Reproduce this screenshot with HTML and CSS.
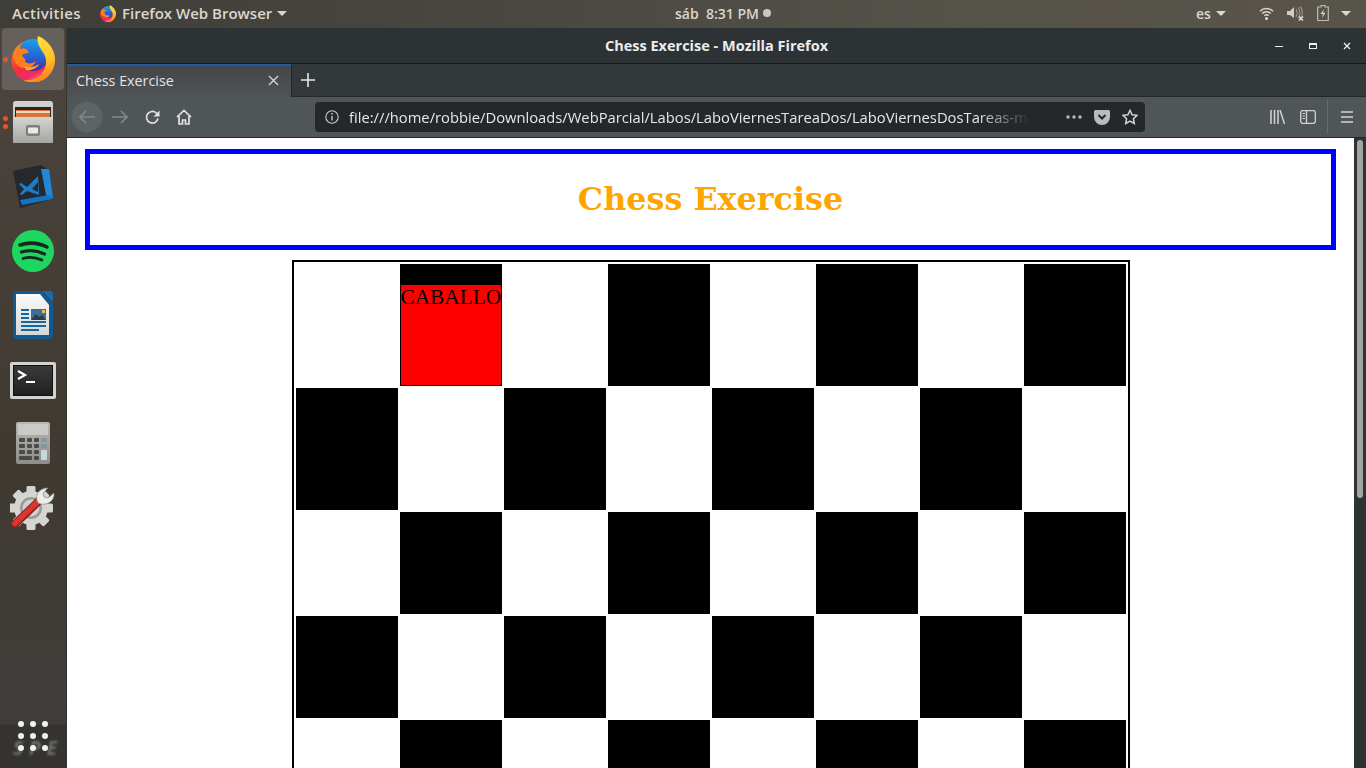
FILE: index.html
```html
<!DOCTYPE html>
<html lang="es">
<head>
<meta charset="utf-8">
<title>Chess Exercise</title>
<link rel="stylesheet" href="styles.css">
</head>
<body>
<svg class="defs" width="0" height="0">
  <defs>
    <linearGradient id="fxBase" x1="0.1" y1="0.1" x2="0.6" y2="1">
      <stop offset="0" stop-color="#ff8a1f"/><stop offset="0.5" stop-color="#f5303a"/><stop offset="0.8" stop-color="#ee2a6a"/><stop offset="1" stop-color="#ff8a22"/>
    </linearGradient>
    <linearGradient id="fxTail" x1="0.3" y1="0" x2="0.6" y2="1">
      <stop offset="0" stop-color="#ffe640"/><stop offset="0.6" stop-color="#ffc126"/><stop offset="1" stop-color="#ff7a1c"/>
    </linearGradient>
    <linearGradient id="fxGlobe" x1="0.5" y1="0" x2="0.4" y2="1">
      <stop offset="0" stop-color="#17a4ef"/><stop offset="0.55" stop-color="#2a62cf"/><stop offset="1" stop-color="#4a2a9e"/>
    </linearGradient>
    <symbol id="firefox" viewBox="0 0 44 46">
      <circle cx="22" cy="25" r="21.500" fill="url(#fxBase)"/>
      <circle cx="22" cy="19" r="16" fill="url(#fxGlobe)"/>
      <path d="M27 0c6 2 13 8 16 17 3 10-1 19-7 24-7 6-17 7-24 3 8 1 16-1 20-8 4-6 4-13 1-18C30 13 25 8 27 0z" fill="url(#fxTail)"/>
      <path d="M4 14c1-3 3-4 6-5-1 2-1 3 0 4 2-1 4-1 6 1 1 1 2 2 1 3l-5 1c-1 1-1 2 0 3 2 1 3 3 2 5 3 2 8 2 11-1-1 4-6 8-12 7-6 0-10-6-11-12 0-2 1-5 2-6z" fill="#ff7f1e"/>
      <path d="M13 30c4 2 9 2 15-2-2 5-9 7-13 6z" fill="#ffa92a"/>
    </symbol>
    <linearGradient id="cabMetal" x1="0" y1="0" x2="0" y2="1">
      <stop offset="0" stop-color="#d4d4d2"/><stop offset="1" stop-color="#a5a5a3"/>
    </linearGradient>
    <linearGradient id="pageGrad" x1="0" y1="0" x2="0" y2="1">
      <stop offset="0" stop-color="#fbfbfa"/><stop offset="1" stop-color="#d6d6d3"/>
    </linearGradient>
    <linearGradient id="calcGrad" x1="0" y1="0" x2="0" y2="1">
      <stop offset="0" stop-color="#b7b7b4"/><stop offset="1" stop-color="#8d8d8a"/>
    </linearGradient>
    <linearGradient id="termGrad" x1="0" y1="0" x2="0" y2="1">
      <stop offset="0" stop-color="#3a3a3a"/><stop offset="1" stop-color="#202020"/>
    </linearGradient>
  </defs>
</svg>

<header class="topbar">
  <span class="activities">Activities</span>
  <span class="appmenu">
    <svg class="appicon" width="16" height="17"><use href="#firefox"/></svg>
    <span>Firefox Web Browser</span>
    <i class="caret"></i>
  </span>
  <span class="clock">sáb&nbsp; 8:31 PM<i class="clockdot"></i></span>
  <span class="lang">es<i class="caret"></i></span>
  <span class="status">
    <svg class="st-wifi" width="15" height="14" viewBox="0 0 15 14"><path d="M1 5.200a9.200 9.200 0 0 1 13 0" fill="none" stroke="#d8d6cf" stroke-width="1.500"/><path d="M3.200 7.600a6 6 0 0 1 8.600 0" fill="none" stroke="#d8d6cf" stroke-width="1.500"/><path d="M5.400 9.800a3 3 0 0 1 4.200 0" fill="none" stroke="#d8d6cf" stroke-width="1.400"/><circle cx="7.500" cy="12.400" r="1.500" fill="#e4e2dc"/></svg>
    <svg class="st-vol" width="17" height="15" viewBox="0 0 17 15"><path d="M0 5h3l4-4v11l-4-3H0z" fill="#cfcdc6"/><path d="M9 3c1.500 2 1.500 6 0 8M11 1.500c2.500 3 2.500 8 0 11M13 .5c2.800 3 3 8 1 10.500" fill="none" stroke="#99978f" stroke-width="1.100"/><path d="M12 10.500l4 4M16 10.500l-4 4" stroke="#e4e2dc" stroke-width="1.500"/></svg>
    <svg class="st-bat" width="12" height="16" viewBox="0 0 12 16"><path d="M4 .5h4V2h3.300v13.500H.7V2H4z" fill="none" stroke="#bdbbb4" stroke-width="1.200"/><path d="M7 4L3.500 9H6l-1 4 3.500-5.200H6z" fill="#d8d6cf"/></svg>
    <i class="caret"></i>
  </span>
</header>

<div class="desktop">
  <nav class="dock">
    <div class="dock-item active"><i class="pip"></i>
      <svg width="44" height="46"><use href="#firefox"/></svg>
    </div>
    <div class="dock-item"><i class="pip pip-a"></i><i class="pip pip-b"></i>
      <svg class="ic-files" width="44" height="44" viewBox="0 0 44 44">
        <path d="M2 4a3 3 0 0 1 3-3h34a3 3 0 0 1 3 3v39H2z" fill="url(#cabMetal)"/>
        <rect x="4" y="7" width="36" height="11" fill="#2b2622"/>
        <rect x="5" y="10" width="34" height="8" fill="#d8743a"/>
        <rect x="5" y="11" width="34" height="2" fill="#f3d9b5"/>
        <rect x="2" y="17" width="40" height="26" rx="1" fill="url(#cabMetal)"/>
        <rect x="15" y="25" width="14" height="11" rx="2" fill="#7e7e7c"/>
        <rect x="17" y="27.500" width="10" height="6" rx="1" fill="#e9e9e7"/>
      </svg>
    </div>
    <div class="dock-item">
      <svg width="42" height="44" viewBox="0 0 42 44">
        <path d="M1 6L29 0l6 4 6 30L8 43z" fill="#25282c"/>
        <path d="M29 4l8 0 4 29-6 2z" fill="#1f86d8"/>
        <path d="M8 35l29-5 4 4-31 6z" fill="#1673bd"/>
        <path d="M26 11L15 22l-6-4-2 1 5 5-4 5 2 1 5-4 12 4z" fill="#1f7cc8"/>
        <path d="M26 17l-6 7 6 3z" fill="#25282c"/>
      </svg>
    </div>
    <div class="dock-item">
      <svg width="42" height="42" viewBox="0 0 42 42">
        <circle cx="21" cy="21" r="21" fill="#1ed760"/>
        <path d="M8 15c9-3 19-2 27 2" fill="none" stroke="#15291c" stroke-width="3.600" stroke-linecap="round"/>
        <path d="M9.500 22c8-2.500 16-1.500 23 2" fill="none" stroke="#15291c" stroke-width="3.200" stroke-linecap="round"/>
        <path d="M11 28.500c6-2 13-1.200 19 1.500" fill="none" stroke="#15291c" stroke-width="2.700" stroke-linecap="round"/>
      </svg>
    </div>
    <div class="dock-item">
      <svg width="40" height="48" viewBox="0 0 40 48">
        <path d="M3 0h25l12 12v33a3 3 0 0 1-3 3H3a3 3 0 0 1-3-3V3a3 3 0 0 1 3-3z" fill="#0f5a92"/>
        <path d="M3 3h24l9 11v30H3z" fill="url(#pageGrad)"/>
        <path d="M29 0h9l2 2v9z" fill="#1a6ba8"/>
        <path d="M8 18h8v2H8zM8 22h8v2H8zM8 26h8v2H8zM8 30h25v2H8zM8 34h25v2H8zM8 38h18v2H8z" fill="#15659f"/>
        <rect x="18" y="18" width="15" height="11" fill="#3f6f95"/>
        <path d="M18 29l5-6 3 3 3-2 4 5z" fill="#2a3c4e"/>
        <rect x="29" y="19" width="3" height="3" fill="#e8c24a"/>
      </svg>
    </div>
    <div class="dock-item">
      <svg class="ic-term" width="46" height="37" viewBox="0 0 46 37">
        <rect width="46" height="37" rx="2" fill="#d2d2cf"/>
        <rect x="3" y="3" width="40" height="31" fill="#111"/>
        <rect x="4" y="4" width="38" height="29" fill="url(#termGrad)"/>
        <path d="M8 9l7 4-7 4" fill="none" stroke="#fff" stroke-width="2.200"/>
        <rect x="16" y="19" width="9" height="2" fill="#fff"/>
      </svg>
    </div>
    <div class="dock-item">
      <svg width="34" height="42" viewBox="0 0 34 42">
        <rect width="34" height="42" rx="2" fill="url(#calcGrad)"/>
        <rect x="2" y="2" width="30" height="11" fill="#c9c9c6"/>
        <g fill="#4a4c4c">
          <rect x="3" y="16" width="6" height="4" rx="1"/><rect x="11" y="16" width="5" height="4" rx="1"/><rect x="18" y="16" width="5" height="4" rx="1"/>
          <rect x="3" y="22" width="6" height="4" rx="1"/><rect x="11" y="22" width="5" height="4" rx="1"/><rect x="18" y="22" width="5" height="4" rx="1"/>
          <rect x="3" y="28" width="6" height="4" rx="1"/><rect x="11" y="28" width="5" height="4" rx="1"/><rect x="18" y="28" width="5" height="4" rx="1"/>
          <rect x="3" y="34" width="13" height="4" rx="1"/><rect x="18" y="34" width="5" height="4" rx="1"/>
        </g>
        <rect x="25" y="16" width="6" height="4" rx="1" fill="#7f9a9c"/><rect x="25" y="22" width="6" height="4" rx="1" fill="#7f9a9c"/>
        <rect x="25" y="28" width="6" height="10" rx="1" fill="#c5dadb"/>
      </svg>
    </div>
    <div class="dock-item">
      <svg width="46" height="46" viewBox="0 0 46 46">
        <g fill="#d4d4d1">
          <circle cx="21" cy="24" r="17"/>
          <rect x="16.500" y="2" width="9" height="44" rx="1.500"/>
          <rect x="16.500" y="2" width="9" height="44" rx="1.500" transform="rotate(45 21 24)"/>
          <rect x="16.500" y="2" width="9" height="44" rx="1.500" transform="rotate(90 21 24)"/>
          <rect x="16.500" y="2" width="9" height="44" rx="1.500" transform="rotate(135 21 24)"/>
        </g>
        <circle cx="21" cy="24" r="11" fill="#9a9a97"/>
        <circle cx="21" cy="24" r="8.500" fill="#cfcfcc"/>
        <path d="M5 40L30 16" stroke="#8e1f1c" stroke-width="8" stroke-linecap="round"/>
        <path d="M5 39.500L30 15.500" stroke="#d8362f" stroke-width="5.500" stroke-linecap="round"/>
        <path d="M28 19C24 11 29 4 38 4l-5 5 1 4 4 1 6-5c1 8-8 14-16 10z" fill="#ecece9" stroke="#8a8a87" stroke-width=".7"/>
      </svg>
    </div>
    <div class="apps">
      <i></i><i></i><i></i><i></i><i></i><i></i><i></i><i></i><i></i>
    </div>
    <span class="wall-text">SPE</span>
  </nav>

  <section class="window">
    <div class="titlebar">
      <span class="wintitle">Chess Exercise - Mozilla Firefox</span>
      <span class="winctl">
        <i class="w-min"></i><i class="w-max"></i>
        <svg width="8" height="8" viewBox="0 0 8 8"><path d="M1 1l6 6M7 1l-6 6" stroke="#eee" stroke-width="1.300"/></svg>
      </span>
    </div>
    <div class="tabbar">
      <div class="tab">
        <span>Chess Exercise</span>
        <svg width="11" height="11" viewBox="0 0 11 11"><path d="M1 1l9 9M10 1l-9 9" stroke="#d4d5d6" stroke-width="1.400"/></svg>
      </div>
      <svg class="newtab" width="14" height="14" viewBox="0 0 14 14"><path d="M7 0v14M0 7h14" stroke="#e6e7e8" stroke-width="1.600"/></svg>
    </div>
    <div class="navbar">
      <span class="backbtn">
        <svg width="16" height="14" viewBox="0 0 16 14"><path d="M7 1L1 7l6 6M1 7h15" fill="none" stroke="#83878a" stroke-width="1.700"/></svg>
      </span>
      <svg class="fwd" width="16" height="14" viewBox="0 0 16 14"><path d="M9 1l6 6-6 6M15 7H0" fill="none" stroke="#83878a" stroke-width="1.700"/></svg>
      <svg class="reload" width="15" height="15" viewBox="0 0 15 15"><path d="M13 8.500A5.800 5.800 0 1 1 11.300 3L13.500 5" fill="none" stroke="#e2e3e4" stroke-width="1.700"/><path d="M14.500 0.500v6h-6z" fill="#e2e3e4"/></svg>
      <svg class="home" width="16" height="16" viewBox="0 0 16 16"><path d="M1 8l7-6.500L15 8M3 7v8h3.500v-4h3v4H13V7" fill="none" stroke="#e2e3e4" stroke-width="1.700"/></svg>
      <div class="urlbar">
        <svg class="info" width="14" height="14" viewBox="0 0 14 14"><circle cx="7" cy="7" r="6.200" fill="none" stroke="#c9cbcc" stroke-width="1.100"/><path d="M7 6v4.500" stroke="#c9cbcc" stroke-width="1.400"/><circle cx="7" cy="3.800" r=".9" fill="#c9cbcc"/></svg>
        <span class="url">file:///home/robbie/Downloads/WebParcial/Labos/LaboViernesTareaDos/LaboViernesDosTareas-ma</span>
        <svg class="dots" width="16" height="4" viewBox="0 0 16 4"><circle cx="2" cy="2" r="1.700" fill="#b9bbbc"/><circle cx="8" cy="2" r="1.700" fill="#b9bbbc"/><circle cx="14" cy="2" r="1.700" fill="#b9bbbc"/></svg>
        <svg class="pocket" width="16" height="15" viewBox="0 0 16 15"><path d="M1.500 0h13A1.500 1.500 0 0 1 16 1.500V7a8 8 0 0 1-16 0V1.500A1.500 1.500 0 0 1 1.500 0z" fill="#b9bbbc"/><path d="M4.500 5L8 8.500 11.500 5" fill="none" stroke="#25282b" stroke-width="2"/></svg>
        <svg class="star" width="16" height="16" viewBox="0 0 16 16"><path d="M8 1.300l2.100 4.400 4.900.6-3.600 3.400.9 4.800L8 12.200l-4.300 2.300.9-4.800L1 6.300l4.900-.6z" fill="none" stroke="#d2d3d4" stroke-width="1.500"/></svg>
      </div>
      <svg class="library" width="15" height="14" viewBox="0 0 15 14"><path d="M1 0v14M4.500 0v14M8 0v14M10 0l4.500 14" fill="none" stroke="#d2d3d4" stroke-width="1.500"/></svg>
      <svg class="sidebar" width="16" height="14" viewBox="0 0 16 14"><rect x=".7" y=".7" width="14.600" height="12.600" rx="2" fill="none" stroke="#d2d3d4" stroke-width="1.300"/><path d="M6.500 1v12" stroke="#d2d3d4" stroke-width="1.300"/><path d="M2.500 3.500h2.500M2.500 6h2.500M2.500 8.500h2.500" stroke="#d2d3d4"/></svg>
      <i class="navsep"></i>
      <svg class="menu" width="12" height="12" viewBox="0 0 12 12"><path d="M0 1h12M0 6h12M0 11h12" stroke="#d2d3d4" stroke-width="1.600"/></svg>
    </div>

    <div class="viewport">
      <main class="page">
        <h1 class="heading">Chess Exercise</h1>
        <div class="board">
          <div class="w"></div><div class="b piece-cell"><div class="piece">CABALLO</div></div><div class="w"></div><div class="b"></div><div class="w"></div><div class="b"></div><div class="w"></div><div class="b"></div>
          <div class="b"></div><div class="w"></div><div class="b"></div><div class="w"></div><div class="b"></div><div class="w"></div><div class="b"></div><div class="w"></div>
          <div class="w"></div><div class="b"></div><div class="w"></div><div class="b"></div><div class="w"></div><div class="b"></div><div class="w"></div><div class="b"></div>
          <div class="b"></div><div class="w"></div><div class="b"></div><div class="w"></div><div class="b"></div><div class="w"></div><div class="b"></div><div class="w"></div>
          <div class="w"></div><div class="b"></div><div class="w"></div><div class="b"></div><div class="w"></div><div class="b"></div><div class="w"></div><div class="b"></div>
        </div>
      </main>
      <div class="scrollbar"><i class="thumb"></i></div>
    </div>
  </section>
</div>
</body>
</html>
```
FILE: styles.css
```css
* { box-sizing: border-box; }
html, body { margin: 0; height: 768px; overflow: hidden; }
body {
  width: 1366px;
  display: flex;
  flex-direction: column;
  font-family: "Open Sans", "Noto Sans", sans-serif;
  background: #3c3a35;
}
i { display: block; }
.defs { position: absolute; }

/* GNOME top bar */
.topbar {
  height: 28px;
  flex: none;
  display: flex;
  align-items: center;
  padding: 0 0 2px 12px;
  background: linear-gradient(90deg, #3f3d38 0%, #4b4842 40%, #55524a 70%, #58544c 100%);
  color: #d9d7d0;
  font-size: 14px;
  font-weight: 600;
}
.activities { width: 88px; font-size: 15px; letter-spacing: .3px; }
.appmenu { display: flex; align-items: center; gap: 6px; width: 575px; font-size: 15px; }
.appicon { flex: none; }
.caret {
  width: 0; height: 0;
  border-left: 5px solid transparent;
  border-right: 5px solid transparent;
  border-top: 5px solid #d9d7d0;
}
.appmenu .caret { margin-left: -1px; }
.clock { display: flex; align-items: center; width: 521px; }
.clockdot { width: 8px; height: 8px; border-radius: 50%; background: #c9c7c0; margin-left: 4px; }
.lang { display: flex; align-items: center; gap: 5px; width: 63px; }
.status { display: flex; align-items: center; }
.st-wifi { margin-right: 13px; }
.st-vol { margin-right: 13px; }
.st-bat { margin-right: 12px; }

.desktop { flex: 1; display: flex; min-height: 0; }

/* Ubuntu dock */
.dock {
  position: relative;
  width: 67px;
  flex: none;
  display: flex;
  flex-direction: column;
  align-items: center;
  overflow: hidden;
  background: linear-gradient(180deg, #4c453f 0%, #453e37 35%, #3f3932 60%, #3f3e3a 90%, #3e3d39 94%, #34332f 94.3%, #34332f 100%);
  border-right: 1px solid #37352f;
}
.dock-item {
  position: relative;
  width: 62px;
  height: 62px;
  flex: none;
  margin-left: -1px;
  margin-bottom: 2px;
  display: flex;
  align-items: center;
  justify-content: center;
}
.dock-item.active { background: #65605b; border-radius: 4px; }
.ic-files { margin-top: -2px; }
.ic-term { margin-top: 3px; }
.pip { position: absolute; left: 1px; top: 29px; width: 5px; height: 5px; border-radius: 50%; background: #e95420; }
.pip-a { top: 24px; }
.pip-b { top: 32px; }
.apps {
  position: absolute;
  left: 18px;
  top: 693px;
  display: grid;
  grid-template-columns: repeat(3, 6px);
  gap: 6px;
  z-index: 1;
}
.apps i { width: 6px; height: 6px; border-radius: 50%; background: #f2f2f0; }
.wall-text {
  position: absolute;
  left: 13px;
  top: 710px;
  font-size: 19px;
  font-weight: 700;
  font-style: italic;
  letter-spacing: 6px;
  line-height: 20px;
  white-space: nowrap;
  color: #6f6e69;
  filter: blur(1px);
}

/* Firefox window */
.window { flex: 1; display: flex; flex-direction: column; min-width: 0; }
.titlebar {
  height: 36px;
  flex: none;
  position: relative;
  display: flex;
  align-items: center;
  justify-content: center;
  background: #2d3235;
  border-bottom: 1px solid #17191b;
}
.wintitle { color: #eceded; font-size: 14.5px; font-weight: 700; }
.winctl { position: absolute; right: 15px; top: 14px; display: flex; align-items: center; gap: 26px; }
.w-min { width: 8px; height: 1px; background: #eee; }
.w-max { width: 8px; height: 6px; border: 1px solid #eee; border-top-width: 2px; }
.tabbar {
  height: 33px;
  flex: none;
  display: flex;
  align-items: center;
  background: #33383b;
  border-bottom: 1px solid #25282a;
}
.tab {
  width: 225px;
  height: 33px;
  margin-bottom: -1px;
  display: flex;
  align-items: center;
  justify-content: space-between;
  padding: 0 12px 2px 9px;
  background: linear-gradient(180deg, #43474a, #4f5356);
  border-top: 2px solid #1f5a9e;
  border-right: 1px solid #222527;
  color: #e3e4e5;
  font-size: 14.3px;
}
.newtab { margin-left: 9px; }
.navbar {
  height: 41px;
  flex: none;
  display: flex;
  align-items: center;
  background: #505558;
  border-bottom: 1px solid #232628;
  padding-left: 4px;
}
.backbtn {
  width: 32px; height: 32px;
  border-radius: 50%;
  background: #5e6366;
  border: 1px solid #575c5f;
  display: flex;
  align-items: center;
  justify-content: center;
  flex: none;
}
.fwd { margin-left: 9px; flex: none; }
.reload { margin-left: 17px; flex: none; }
.home { margin-left: 16px; flex: none; }
.urlbar {
  width: 830px;
  height: 30px;
  margin-left: 123px;
  flex: none;
  display: flex;
  align-items: center;
  background: #25282b;
  border-radius: 4px;
  padding-left: 10px;
  color: #e6e7e8;
  font-size: 14.75px;
}
.info { flex: none; }
.url {
  width: 682px;
  margin-left: 10px;
  flex: none;
  white-space: nowrap;
  -webkit-mask-image: linear-gradient(90deg, #000 92%, transparent 100%);
  mask-image: linear-gradient(90deg, #000 92%, transparent 100%);
}
.dots { margin-left: 35px; flex: none; }
.pocket { margin-left: 12px; flex: none; }
.star { margin-left: 12px; flex: none; }
.library { margin-left: 125px; flex: none; }
.sidebar { margin-left: 15px; flex: none; }
.navsep { width: 1px; height: 34px; background: #686c6f; margin-left: 11px; flex: none; }
.menu { margin-left: 13px; flex: none; }

/* Page */
.viewport { flex: 1; display: flex; min-height: 0; overflow: hidden; }
.page { flex: 1; min-width: 0; background: #fff; padding: 11px 18px 0; overflow: hidden; }
.heading {
  margin: 0;
  height: 101px;
  padding-bottom: 2px;
  display: flex;
  align-items: center;
  justify-content: center;
  border: 5px solid #00f;
  color: orange;
  font-family: "DejaVu Serif", serif;
  font-size: 31.8px;
  font-weight: 700;
}
.board {
  margin: 10px auto 0;
  width: 838px;
  display: grid;
  grid-template-columns: repeat(8, 102px);
  grid-template-rows: 122px 122px 102px 102px 102px;
  gap: 2px;
  padding: 2px;
  border: 2px solid #000;
}
.b { background: #000; }
.w { background: #fff; }
.piece-cell { display: flex; align-items: flex-end; }
.piece {
  width: 102px;
  height: 102px;
  padding-top: 1px;
  background: #f00;
  border: 1px solid #000;
  color: #000;
  font-family: "Liberation Serif", serif;
  font-size: 21.3px;
  line-height: 22px;
  white-space: nowrap;
}
.scrollbar { width: 12px; flex: none; background: #2d3235; padding: 2px 3px; }
.thumb { width: 6px; height: 358px; background: #a3a3a3; border-radius: 3px; }
```
